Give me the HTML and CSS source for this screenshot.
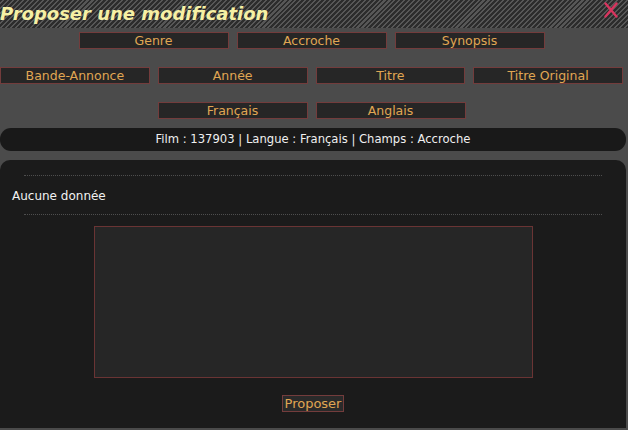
FILE: index.html
```html
<!DOCTYPE html>
<html lang="fr">
<head>
<meta charset="utf-8">
<title>Proposer une modification</title>
<link rel="stylesheet" href="styles.css">
</head>
<body>
<div class="titlebar">
  <h1 class="title">Proposer une modification</h1>
  <svg class="close" width="14" height="16" viewBox="0 0 14 16" aria-label="Fermer">
    <path d="M1.5 1.5 L12.5 14.5 M12.5 1.5 L1.5 14.5" stroke="#d8345e" stroke-width="2.4" stroke-linecap="round" fill="none"/>
  </svg>
</div>
<div class="tabs">
  <div class="tab-row">
    <span class="tab">Genre</span>
    <span class="tab">Accroche</span>
    <span class="tab">Synopsis</span>
  </div>
  <div class="tab-row">
    <span class="tab">Bande-Annonce</span>
    <span class="tab">Année</span>
    <span class="tab">Titre</span>
    <span class="tab">Titre Original</span>
  </div>
  <div class="tab-row">
    <span class="tab">Français</span>
    <span class="tab">Anglais</span>
  </div>
</div>
<div class="info">Film : 137903 | Langue : Français | Champs : Accroche</div>
<div class="panel">
  <div class="sep"></div>
  <p class="empty">Aucune donnée</p>
  <div class="sep"></div>
  <textarea class="field"></textarea>
  <div class="actions"><button class="submit">Proposer</button></div>
</div>
</body>
</html>
```
FILE: styles.css
```css
html, body {
  margin: 0;
  padding: 0;
}
body {
  background: #4b4b4b;
  font-family: "DejaVu Sans", Verdana, sans-serif;
  font-size: 12px;
  width: 628px;
  height: 430px;
  overflow: hidden;
}
.titlebar {
  height: 28px;
  display: flex;
  align-items: flex-start;
  justify-content: space-between;
  background: repeating-linear-gradient(135deg, #2c2c2c 0, #2c2c2c 2px, #575757 2px, #575757 3.5px);
}
.title {
  margin: 0;
  padding-top: 3px;
  font-size: 18px;
  font-weight: bold;
  font-style: italic;
  color: #f6f0a4;
  line-height: 22px;
}
.close {
  margin: 2px 10px 0 0;
}
.tabs {
  width: 623px;
  padding-top: 4px;
  display: flex;
  flex-direction: column;
  gap: 18px;
}
.tab-row {
  display: flex;
  justify-content: center;
  gap: 8px;
}
.tab {
  box-sizing: border-box;
  width: 150px;
  height: 17px;
  line-height: 16px;
  text-align: center;
  background: #262626;
  border: 1px solid #733c3c;
  color: #e0a653;
  font-size: 12.5px;
}
.info {
  margin-top: 9px;
  width: 626px;
  height: 23px;
  line-height: 23px;
  border-radius: 11px;
  background: #191919;
  color: #f0f0f0;
  text-align: center;
  font-size: 11.6px;
}
.panel {
  margin-top: 9px;
  width: 626px;
  height: 268px;
  border-radius: 10px 10px 0 0;
  background: #1b1b1b;
  display: flex;
  flex-direction: column;
  align-items: center;
}
.sep {
  width: 578px;
  margin-top: 15px;
  border-top: 1px dotted #4e4e4e;
}
.empty {
  align-self: flex-start;
  margin: 13px 0 0 12px;
  color: #f2f2f2;
  line-height: 15px;
}
.sep + .empty + .sep {
  margin-top: 10px;
}
.field {
  box-sizing: border-box;
  margin-top: 11px;
  width: 439px;
  height: 152px;
  background: #262626;
  border: 1px solid #6a3434;
  resize: none;
  padding: 0;
}
.actions {
  margin-top: 17px;
}
.submit {
  box-sizing: border-box;
  height: 17px;
  padding: 0 2px;
  background: #2a2a2a;
  border: 1px solid #733c3c;
  color: #e0a653;
  font-family: "DejaVu Sans", Verdana, sans-serif;
  font-size: 13px;
  line-height: 15px;
}
```
